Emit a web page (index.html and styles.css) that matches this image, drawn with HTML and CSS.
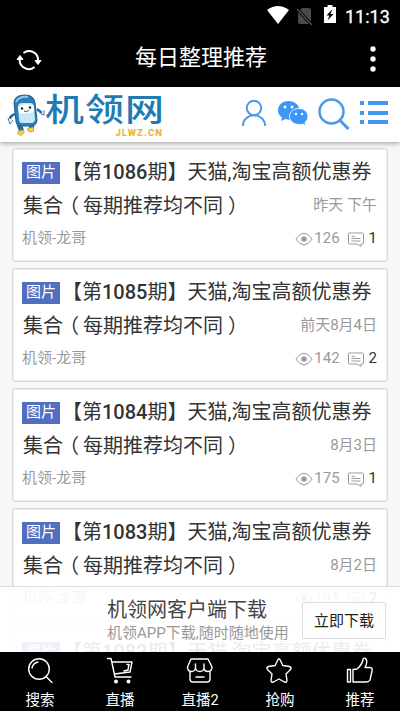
FILE: index.html
```html
<!DOCTYPE html>
<html lang="zh-CN">
<head>
<meta charset="utf-8">
<title>每日整理推荐</title>
<link rel="stylesheet" href="styles.css">
</head>
<body>
<svg class="defs" aria-hidden="true">
  <symbol id="eye" viewBox="0 0 18 14"><path d="M1 7.200Q4.500 1.200 9 1.200T17 7.200Q13.500 12.800 9 12.800T1 7.200Z" fill="none" stroke="currentColor"/><circle cx="9" cy="7" r="2.700" fill="currentColor"/></symbol>
  <symbol id="comment" viewBox="0 0 18 16"><path d="M2.500 1H15.500Q16.500 1 16.500 2V11Q16.500 12 15.500 12H14V14.500L10.500 12H2.500Q1.500 12 1.500 11V2Q1.500 1 2.500 1ZM4.500 4.300H8M4.500 6.500H13.500M4.500 9H13.500" fill="none" stroke="currentColor"/></symbol>
</svg>
<div class="phone">
  <div class="status">
    <svg class="wifi" viewBox="0 0 22 18"><path d="M0 4Q11-4 22 4L11 18Z" fill="#fff"/></svg>
    <svg class="sim" viewBox="0 0 16 18"><path d="M5 1H12Q14 1 14 3V16Q14 17 13 17H3Q1 17 1 15V5Z" fill="#494949"/><path d="M0 2L15 18" stroke="#000" stroke-width="3"/><path d="M0 2L15 18" stroke="#555" stroke-width="1.300"/></svg>
    <svg class="battery" viewBox="0 0 12 18"><path d="M3.500 0H8.500V2H12V18H0V2H3.500Z" fill="#fff"/><path d="M8.500 4L2.500 10.500H5.500L3.500 15.500L9.500 9H6.500Z" fill="#000"/></svg>
    <span class="clock">11:13</span>
  </div>
  <div class="appbar">
    <svg class="refresh" viewBox="0 0 26 22" fill="none" stroke="#fff" stroke-width="2"><path d="M7.500 4A9 9 0 0 1 22 12M18.500 18A9 9 0 0 1 4 9"/><path d="M19 11.500H25L22 15.500ZM1 10.500H7L4 6.500Z" fill="#fff" stroke-width="1"/></svg>
    <h1>每日整理推荐</h1>
    <svg class="more" viewBox="0 0 6 26" fill="#fff"><circle cx="3" cy="3" r="2.700"/><circle cx="3" cy="13" r="2.700"/><circle cx="3" cy="23" r="2.700"/></svg>
  </div>
  <header class="site">
    <svg class="mascot" viewBox="0 0 38 42">
      <path d="M8 20Q2 22 3 27M30 15L36 20" fill="none" stroke="#216fa9" stroke-width="2.500"/>
      <path d="M12 30L15 38M25 30L24 36" stroke="#216fa9" stroke-width="5"/>
      <path d="M7 9Q7 1 18 1Q27 1 28 9L30 26Q30 31 25 32L14 32Q9 32 9 27Z" fill="#2b7db8" stroke="#1b5f98"/>
      <path d="M9 8Q12 2 21 3" fill="none" stroke="#8ec9e4" stroke-width="2"/>
      <path d="M11 13Q11 9 15 9H23Q27 9 27 13L28 25Q28 29 24 29H15Q12 29 12 25Z" fill="#c5e8f4"/>
      <path d="M11 13Q19 8 27 12V18Q19 21 12 19Z" fill="#fff"/>
      <circle cx="15" cy="14.500" r="1.200" fill="#222"/><circle cx="23" cy="13.500" r="1.200" fill="#222"/>
      <path d="M17 17Q20 19 22 16" fill="none" stroke="#444"/>
      <path d="M1 24L3 30L6 26M34 20L37 21L37 16" fill="#fff" stroke="#4c7898"/>
      <path d="M11 37L17 36V39Q14 43 11 40ZM20 35L26 33L27 37Q24 39 21 37Z" fill="#f3cf4b" stroke="#c99f2c" stroke-width=".7"/>
    </svg>
    <div class="brand"><span class="name">机领网</span><span class="domain">JLWZ.CN</span></div>
    <nav class="tools">
      <svg class="user" viewBox="0 0 26 28" fill="none" stroke="#4a98e8" stroke-width="2"><circle cx="13" cy="9" r="7.200"/><path d="M1.800 27C2.500 12.800 23.500 12.800 24.200 27"/></svg>
      <svg class="wechat" viewBox="0 0 32 26"><path d="M11.500 1C5.500 1 1 5 1 10.500Q1 14.500 5 17.500L4 21L8.500 19Q11 20 14 19.500C19 19 22.500 15 22.500 10.500C22.500 5 17.500 1 11.500 1Z" fill="#3e97f7"/><path d="M22 8.500C16.500 8.500 12.500 12 12.500 16.500C12.500 21 17 24.500 22 24.500Q24 24.500 25.500 24L29 25.500L28 22.500Q31 20 31 16.500C31 12 27 8.500 22 8.500Z" fill="#3e97f7" stroke="#fff" stroke-width=".8"/><g fill="#fff"><circle cx="8" cy="7" r="1.500"/><circle cx="15" cy="7" r="1.500"/><circle cx="19" cy="14" r="1.200"/><circle cx="25" cy="14" r="1.200"/></g></svg>
      <svg class="search" viewBox="0 0 32 32" fill="none" stroke="#4a98e8"><circle cx="13.500" cy="13.500" r="12" stroke-width="2.500"/><path d="M22 22.500L30.500 31" stroke-width="3"/></svg>
      <svg class="list" viewBox="0 0 28 24" fill="#4397f0"><path d="M0 0H4V4H0ZM8 0H28V4H8ZM0 10H4V14H0ZM8 10H28V14H8ZM0 19H4V23H0ZM8 19H28V23H8Z"/></svg>
    </nav>
  </header>
  <main class="feed">
    <article class="card">
      <p class="title"><span class="tag">图片</span>【第<b>1086</b>期】天猫,淘宝高额优惠券</p>
      <div class="row"><p class="title">集合<i class="open">（</i>每期推荐均不同<i class="close">）</i></p><time>昨天 下午</time></div>
      <div class="row meta"><span>机领-龙哥</span><span class="stats"><svg class="eye"><use href="#eye"/></svg><span class="views">126</span><svg class="comment"><use href="#comment"/></svg><em>1</em></span></div>
    </article>
    <article class="card">
      <p class="title"><span class="tag">图片</span>【第<b>1085</b>期】天猫,淘宝高额优惠券</p>
      <div class="row"><p class="title">集合<i class="open">（</i>每期推荐均不同<i class="close">）</i></p><time>前天8月4日</time></div>
      <div class="row meta"><span>机领-龙哥</span><span class="stats"><svg class="eye"><use href="#eye"/></svg><span class="views">142</span><svg class="comment"><use href="#comment"/></svg><em>2</em></span></div>
    </article>
    <article class="card">
      <p class="title"><span class="tag">图片</span>【第<b>1084</b>期】天猫,淘宝高额优惠券</p>
      <div class="row"><p class="title">集合<i class="open">（</i>每期推荐均不同<i class="close">）</i></p><time>8月3日</time></div>
      <div class="row meta"><span>机领-龙哥</span><span class="stats"><svg class="eye"><use href="#eye"/></svg><span class="views">175</span><svg class="comment"><use href="#comment"/></svg><em>1</em></span></div>
    </article>
    <article class="card">
      <p class="title"><span class="tag">图片</span>【第<b>1083</b>期】天猫,淘宝高额优惠券</p>
      <div class="row"><p class="title">集合<i class="open">（</i>每期推荐均不同<i class="close">）</i></p><time>8月2日</time></div>
      <div class="row meta"><span>机领-龙哥</span><span class="stats"><svg class="eye"><use href="#eye"/></svg><span class="views">191</span><svg class="comment"><use href="#comment"/></svg><em>2</em></span></div>
    </article>
    <article class="card">
      <p class="title"><span class="tag">图片</span>【第<b>1082</b>期】天猫,淘宝高额优惠券</p>
    </article>
    <aside class="download">
      <div class="pitch"><strong>机领网客户端下载</strong><span>机领APP下载,随时随地使用</span></div>
      <button>立即下载</button>
    </aside>
  </main>
  <nav class="tabs">
    <a><svg viewBox="0 0 28 28"><circle cx="13" cy="12" r="10.300"/><path d="M6 11Q7 6 12 5M20 19.500L26 25.500" /></svg>搜索</a>
    <a><svg viewBox="0 0 28 28"><path d="M1.500 1.500H5L9 20H25M6 5H26L24 15L8.500 17M21 7.500H23L22 13L18 14"/><circle cx="10" cy="24.500" r="1.300" fill="#fff"/><circle cx="22.500" cy="24.500" r="1.300" fill="#fff"/></svg>直播</a>
    <a><svg viewBox="0 0 28 28"><path d="M5 2H22L26 10Q26 14.500 22 14.500Q18 14.500 18 11Q17.500 14.500 14 14.500Q10 14.500 9.500 11Q9 14.500 5.500 14.500Q1.500 14.500 1.500 10ZM9.500 11V7M18 11V7M4 15V22Q4 25 7 25H21Q24 25 24 22V15M10 20H18"/></svg>直播2</a>
    <a><svg viewBox="0 0 28 28"><path d="M11.800 3Q13 0.500 14.200 3L16.800 8.500L23.500 9.500Q26 10.500 24.500 12.500L20 17L21 23.500Q20.700 26 18.500 25L13 22L7.500 25Q5.300 26 5 23.500L6 17L1.500 12.500Q0 10.500 2.500 9.500L9.200 8.500Z"/></svg>抢购</a>
    <a><svg viewBox="0 0 28 28"><path d="M1.500 12.500H4.500V25H1.500ZM7 25V12.500L11 12Q16 8 17 2.500Q18 0 20 2Q22 5 19 10.500H24Q27 11 26 14L24 23Q23 25 20 25H7"/></svg>推荐</a>
  </nav>
</div>
</body>
</html>
```
FILE: styles.css
```css
* { box-sizing: border-box; }
body, h1, p { margin: 0; }
body { font-family: Roboto, "Noto Sans CJK SC", sans-serif; background: #000; overflow: hidden; }
svg { display: block; flex: none; }
.defs { display: none; }
.phone { width: 400px; height: 711px; display: flex; flex-direction: column; }

.status { height: 32px; flex: none; display: flex; justify-content: flex-end; align-items: flex-start; padding: 6px 10px 0 0; color: #fff; }
.wifi { width: 22px; height: 18px; }
.sim { width: 16px; height: 18px; margin: 1px 0 0 8px; }
.battery { width: 12px; height: 18px; margin: -1px 0 0 11px; }
.clock { font-size: 18px; font-weight: 400; -webkit-text-stroke: .3px #fff; line-height: 22px; width: 45px; margin-left: 9px; white-space: nowrap; }
.appbar { height: 55px; flex: none; display: flex; align-items: center; justify-content: space-between; padding: 0 24px 5px 16px; color: #fff; }
.appbar h1 { font-size: 22px; font-weight: 400; line-height: 30px; margin: 2px 0 0 -10px; }
.refresh { width: 26px; height: 22px; margin-top: 5px; }
.more { width: 6px; height: 26px; margin-top: 4px; }

.site { height: 55px; flex: none; display: flex; align-items: flex-start; padding: 7px 12px 0 7px; background: #fff; box-shadow: 0 1px 5px rgba(0,0,0,.4); z-index: 1; }
.mascot { width: 38px; height: 42px; }
.brand { width: 120px; height: 44px; display: flex; flex-direction: column; }
.name { height: 33px; font-size: 39px; line-height: 33px; font-weight: 500; letter-spacing: 1px; color: #217bb3; transform: scaleY(.82); white-space: nowrap; }
.domain { align-self: flex-end; margin: 1px 2px 0 0; font: 900 9.5px/9px Roboto, sans-serif; letter-spacing: 1.1px; color: #e6b93d; }
.tools { flex: 1; display: flex; align-items: flex-start; justify-content: flex-end; }
.user { width: 26px; height: 28px; margin-top: 5px; }
.wechat { width: 32px; height: 26px; margin: 6px 0 0 10px; }
.search { width: 32px; height: 32px; margin: 4px 0 0 9px; }
.list { width: 28px; height: 24px; margin: 7px 0 0 10px; }

.feed { flex: 1; min-height: 0; position: relative; overflow: hidden; background: #f7f7f7; padding: 6px 12px 0; }
.card { height: 114px; margin-bottom: 6px; padding: 6px 10px; background: #fff; border: 1px solid #dadada; outline: 1px solid #ececec; outline-offset: -2px; border-radius: 3px; }
.title { font-size: 20px; line-height: 34px; color: #333; white-space: nowrap; }
.title b { font-weight: 500; }
.title i { display: inline-block; width: 20px; font-style: normal; line-height: 20px; }
.open { transform: translateX(-4px); }
.close { transform: translateX(5px); }
.tag { display: inline-block; width: 38px; height: 22px; margin: 0 2px 0 -1px; background: #506fc0; color: #fff; font-size: 15px; line-height: 21px; text-align: center; vertical-align: 2px; }
.row { display: flex; justify-content: space-between; align-items: center; color: #999; }
.row time { font-size: 15px; line-height: 32px; margin-top: -2px; }
.meta { height: 30px; font-size: 15px; }
.meta > span:first-child { margin: -3px 0 0 -1px; }
.stats { display: flex; align-items: center; }
.eye { width: 18px; height: 14px; margin-top: 2px; }
.views { margin-left: 1px; }
.comment { width: 18px; height: 16px; margin: 3px 4px 0 7px; }
.stats em { font-style: normal; color: #333; }

.download { position: absolute; left: 0; right: 0; bottom: 0; height: 66px; display: flex; justify-content: space-between; align-items: flex-start; padding: 9px 14px 0 107px; background: rgba(255,255,255,.9); border-top: 1px solid #ddd; }
.pitch { display: flex; flex-direction: column; white-space: nowrap; }
.pitch strong { font-size: 20px; font-weight: 400; line-height: 28px; color: #444; }
.pitch span { font-size: 15px; line-height: 18px; color: #999; }
.download button { width: 84px; height: 37px; margin-top: 6px; padding: 0; background: rgba(255,255,255,.5); border: 1px solid #ddd; border-radius: 2px; font: 15px/37px Roboto, "Noto Sans CJK SC", sans-serif; color: #222; }

.tabs { height: 59px; flex: none; display: flex; background: #000; color: #fff; }
.tabs a { flex: 1; display: flex; flex-direction: column; align-items: center; padding-top: 5px; font-size: 14.500px; line-height: 21px; }
.tabs svg { width: 28px; height: 28px; margin-bottom: 5px; fill: none; stroke: #fff; stroke-width: 1.400; stroke-linecap: round; stroke-linejoin: round; }
```
